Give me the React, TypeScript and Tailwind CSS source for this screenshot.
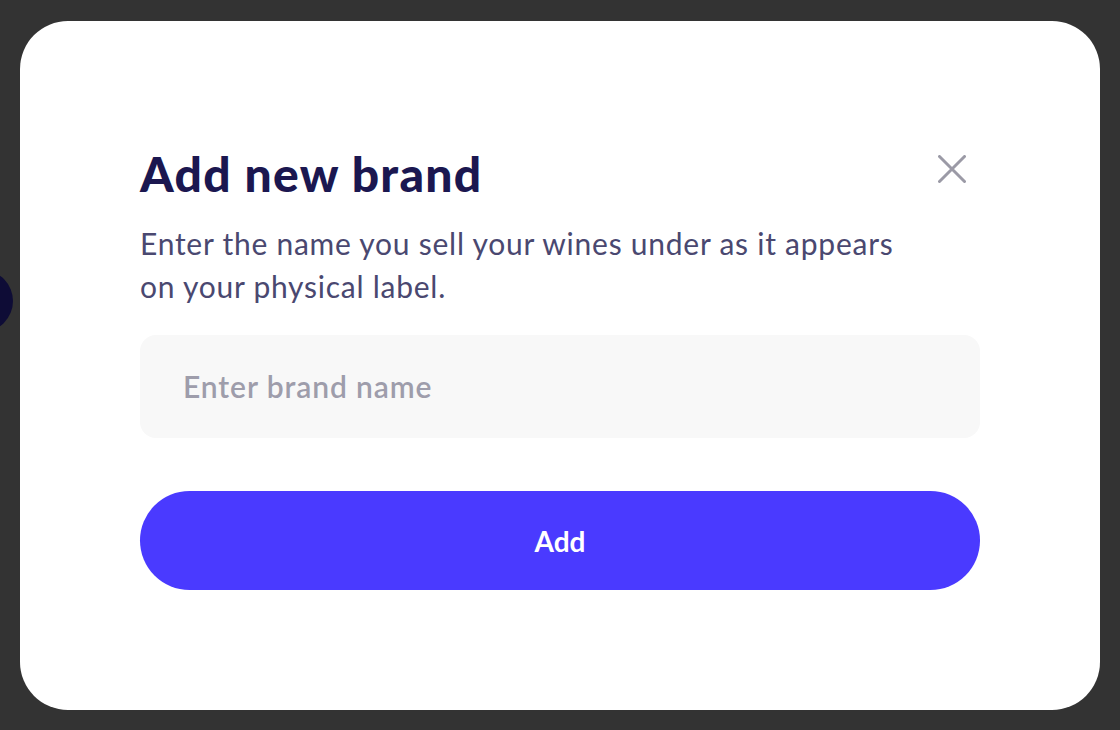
import React from "react";

export default function App() {
  return (
    <div className="relative h-[730px] w-[1120px] overflow-hidden bg-[#333333] pl-[20px] pt-[21px]" style={{ fontFamily: "Lato, 'Noto Sans', sans-serif" }}>
      <div className="absolute left-[-49px] top-[270px] h-[62px] w-[62px] rounded-full bg-[#0e0c36]" />
      <div className="relative flex h-[689px] w-[1080px] flex-col rounded-[48px] bg-white px-[120px] pt-[127px]">
        <div className="flex items-start justify-between">
          <h1 className="text-[48px] font-black leading-[52px] tracking-[1.3px] text-[#1b1750]">Add new brand</h1>
          <button className="mr-[14px] mt-[7px] text-[#9b9aa6]" aria-label="Close">
            <svg width="28" height="28" viewBox="0 0 28 28" fill="none" stroke="currentColor" strokeWidth="3" strokeLinecap="round">
              <path d="M1.5 1.5L26.5 26.5M26.5 1.5L1.5 26.5" />
            </svg>
          </button>
        </div>
        <p className="mt-[22px] w-[765px] text-[30px] font-normal leading-[43px] tracking-[0.75px] text-[#4a4870]">
          Enter the name you sell your wines under as it appears on your physical label.
        </p>
        <div className="mt-[27px] flex h-[103px] items-center rounded-[16px] bg-[#f8f8f8] px-[43px]">
          <input
            className="w-full bg-transparent text-[30px] font-semibold tracking-[0.9px] text-[#33324a] outline-none placeholder:text-[#9e9dab]"
            placeholder="Enter brand name"
          />
        </div>
        <button className="mt-[53px] flex h-[99px] items-center justify-center rounded-full bg-[#4a3aff] text-[28px] font-bold text-white">
          Add
        </button>
      </div>
    </div>
  );
}
